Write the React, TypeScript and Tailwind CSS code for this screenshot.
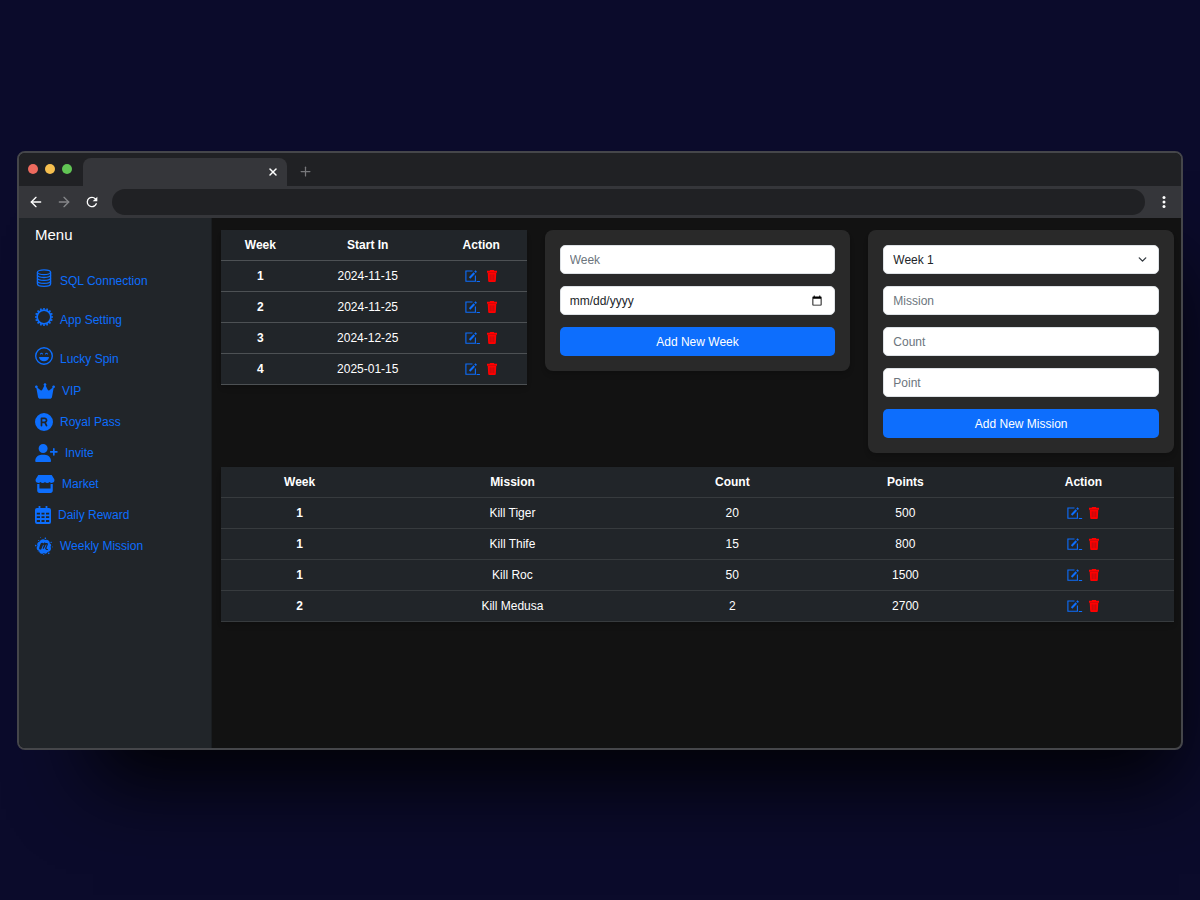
import type { ReactNode } from "react"
import { FaCrown, FaMeetup, FaRegistered, FaStore, FaUserPlus } from "react-icons/fa6"
import { ArrowLeft, ArrowRight, ChevronDown, Plus, X } from "lucide-react"

const weeks = [
  { week: 1, start: "2024-11-15" },
  { week: 2, start: "2024-11-25" },
  { week: 3, start: "2024-12-25" },
  { week: 4, start: "2025-01-15" }
]

const missions = [
  { week: 1, mission: "Kill Tiger", count: 20, points: 500 },
  { week: 1, mission: "Kill Thife", count: 15, points: 800 },
  { week: 1, mission: "Kill Roc", count: 50, points: 1500 },
  { week: 2, mission: "Kill Medusa", count: 2, points: 2700 }
]

const field =
  "block w-full h-[29px] rounded-[5px] border border-[#dee2e6] bg-white px-[9px] text-xs text-[#212529] placeholder:text-[#6c757d]"

// drops the native 1px padding round each part of the date
const dateField =
  "[&::-webkit-datetime-edit-month-field]:p-0 [&::-webkit-datetime-edit-day-field]:p-0 [&::-webkit-datetime-edit-year-field]:p-0"

function DatabaseIcon() {
  return (
    <svg viewBox="0 0 18 18" className="w-[18px] h-[18px]" fill="none" stroke="currentColor" strokeWidth="1.3">
      <ellipse cx="9" cy="3.2" rx="6.6" ry="2.4" />
      <path d="M2.4 3.2v11.5c0 1.4 2.9 2.6 6.6 2.6s6.6-1.2 6.6-2.6V3.2" />
      <path d="M2.4 6.1c0 1.4 2.9 2.4 6.6 2.4s6.6-1 6.6-2.4M2.4 9c0 1.4 2.9 2.4 6.6 2.4s6.6-1 6.6-2.4M2.4 11.9c0 1.4 2.9 2.4 6.6 2.4s6.6-1 6.6-2.4" />
    </svg>
  )
}

function GearIcon() {
  return (
    <svg viewBox="0 0 18 18" className="w-[18px] h-[18px]" fill="none" stroke="currentColor">
      <circle cx="9" cy="9" r="6.9" strokeWidth="1.8" />
      <circle cx="9" cy="9" r="8.2" strokeWidth="1.8" pathLength="64" strokeDasharray="2 2" strokeDashoffset="1" />
    </svg>
  )
}

function GrinIcon() {
  return (
    <svg viewBox="0 0 18 18" className="w-[18px] h-[18px]" fill="none" stroke="currentColor">
      <circle cx="9" cy="9" r="8.3" strokeWidth="1.4" />
      <path d="M5.6 7c.2-1.1 1.6-1.1 1.8 0M10.6 7c.2-1.1 1.6-1.1 1.8 0" strokeWidth="1.1" strokeLinecap="round" />
      <path d="M4.4 9.9h9.2c.3 0 .5.2.4.5-.5 2.3-2.5 3.8-5 3.8s-4.5-1.5-5-3.8c-.1-.3.1-.5.4-.5z" fill="currentColor" stroke="none" />
    </svg>
  )
}

function CalendarIcon() {
  return (
    <svg viewBox="0 0 16 18" className="w-4 h-[18px]" fill="currentColor">
      <path d="M3.6 0h1.8v2h5.2V0h1.8v2H14a2 2 0 0 1 2 2v12a2 2 0 0 1-2 2H2a2 2 0 0 1-2-2V4a2 2 0 0 1 2-2h1.600z" />
      <path
        className="fill-[#212529]"
        d="M1.8 6.700H5v1.700H1.800zM6.500 6.700h3v1.700h-3zM11 6.700h3.200v1.700H11zM1.800 10.200H5v1.900H1.800zM6.500 10.200h3v1.900h-3zM11 10.200h3.200v1.900H11zM1.800 13.900H5V16H1.800zM6.500 13.900h3V16h-3zM11 13.900h3.200V16H11z"
      />
    </svg>
  )
}

function EditIcon() {
  return (
    <svg viewBox="0 0 12 12" className="inline w-3 h-3" fill="none" stroke="currentColor">
      <path d="M7.5 1H.9v10.200h9.500V5.500" strokeWidth="1.1" />
      <path d="M4.6 8l4.700-5" strokeWidth="2" />
      <path d="M10 2.300l1.200-1.300" strokeWidth="2" />
    </svg>
  )
}

function TrashIcon() {
  return (
    <svg viewBox="0 0 12 12" className="w-3 h-3" fill="currentColor">
      <path d="M4.2 0h3.600l.6.800H11v2H1v-2h2.600z" />
      <path d="M1.7 2.800h8.600l-.5 8.200a1 1 0 0 1-1 1H3.200a1 1 0 0 1-1-1z" />
      <path d="M4.2 4.400v5.800M6 4.400v5.800M7.800 4.400v5.800" className="stroke-[#8f1318]" strokeWidth=".6" />
    </svg>
  )
}

const menu = [
  { label: "SQL Connection", icon: <DatabaseIcon />, tall: true },
  { label: "App Setting", icon: <GearIcon />, tall: true },
  { label: "Lucky Spin", icon: <GrinIcon />, tall: true },
  { label: "VIP", icon: <FaCrown className="w-5 h-[18px]" /> },
  { label: "Royal Pass", icon: <FaRegistered className="w-[18px] h-[18px]" /> },
  { label: "Invite", icon: <FaUserPlus className="w-[23px] h-[18px]" /> },
  { label: "Market", icon: <FaStore className="w-5 h-[18px]" /> },
  { label: "Daily Reward", icon: <CalendarIcon /> },
  { label: "Weekly Mission", icon: <FaMeetup className="w-[18px] h-[18px]" /> }
]

function RowActions() {
  return (
    <span className="inline-flex items-center gap-1.5">
      <a href="#edit" aria-label="Edit" className="underline text-[#0d6efd]">
        <EditIcon />
        {"\u00a0"}
      </a>
      <button type="button" aria-label="Delete" className="text-[#ff0000]">
        <TrashIcon />
      </button>
    </span>
  )
}

function Row({ children }: { children: ReactNode }) {
  return <tr className="h-[31px] border-b border-inherit">{children}</tr>
}

function HeadRow({ children }: { children: ReactNode }) {
  return <tr className="h-[30px] border-b border-inherit">{children}</tr>
}

export default function App() {
  return (
    <div className="min-h-screen bg-[#0b0b2b] flex flex-col justify-center px-[17px] font-['Liberation_Sans',Arial,sans-serif] text-xs text-white">

      <div className="mt-px border-2 border-[#45464a] rounded-lg overflow-hidden bg-[#121212] shadow-[36px_72px_76px_-40px_#000000e6]">

        {/* ================= TAB BAR ================= */}
        <div className="flex items-end h-[33px] bg-[#202124]">
          <div className="flex gap-[7px] pl-[9px] pr-[11px] pb-3">
            <span className="w-[10px] h-[10px] rounded-full bg-[#ed6a5e]" />
            <span className="w-[10px] h-[10px] rounded-full bg-[#f5bf4f]" />
            <span className="w-[10px] h-[10px] rounded-full bg-[#61c554]" />
          </div>
          <div className="flex items-center justify-end w-[204px] h-7 px-2 rounded-t-lg bg-[#35363a]">
            <button type="button" aria-label="Close tab">
              <X size={12} strokeWidth={3} />
            </button>
          </div>
          <button type="button" aria-label="New tab" className="self-center pl-[11px] pt-1 text-[#77787b]">
            <Plus size={15} />
          </button>
        </div>

        {/* ================= TOOLBAR ================= */}
        <div className="flex items-center h-8 pl-[9px] pr-[10px] bg-[#35363a]">
          <button type="button" aria-label="Back" className="mr-3"><ArrowLeft size={16} /></button>
          <button type="button" aria-label="Forward" className="mr-3 text-[#86878a]"><ArrowRight size={16} /></button>
          <button type="button" aria-label="Reload" className="mr-3">
            <svg viewBox="0 0 24 24" className="w-4 h-4" fill="currentColor">
              <path d="M17.65 6.35A7.96 7.96 0 0 0 12 4a8 8 0 1 0 7.73 10h-2.08A6 6 0 1 1 12 6c1.66 0 3.14.69 4.22 1.78L13 11h7V4l-2.35 2.35z" />
            </svg>
          </button>
          <div className="flex-1 h-[26px] rounded-full bg-[#202124]" />
          <button type="button" aria-label="Browser menu" className="ml-3">
            <svg viewBox="0 0 14 14" className="w-[14px] h-[14px]" fill="currentColor">
              <circle cx="7" cy="2.6" r="1.5" />
              <circle cx="7" cy="7" r="1.5" />
              <circle cx="7" cy="11.4" r="1.5" />
            </svg>
          </button>
        </div>

        <div className="flex min-h-[530px]">

          {/* ================= SIDEBAR ================= */}
          <aside className="shrink-0 w-[193px] bg-[#212529] border-r border-[#1a1d20] pl-4 pt-[5px]">
            <h1 className="text-[15px] leading-6 mb-[11px]">Menu</h1>
            <nav className="flex flex-col text-[#0d6efd]">
              {menu.map((m) => (
                <a
                  key={m.label}
                  href="#menu"
                  className={m.tall ? "flex items-center gap-[7px] h-[39px]" : "flex items-center gap-[7px] h-[31px]"}
                >
                  {m.icon}
                  <span className={m.tall ? "pt-1.5" : ""}>{m.label}</span>
                </a>
              ))}
            </nav>
          </aside>

          {/* ================= CONTENT ================= */}
          <main className="flex-1 min-w-0 pl-[9px] pr-[7px] pt-3">
            <div className="grid grid-cols-3 items-start gap-[18px]">

              <table className="w-full table-fixed text-center bg-[#212529] border-[#4d5154] shadow-md">
                <thead className="border-inherit">
                  <HeadRow>
                    <th className="w-[52px]">Week</th>
                    <th className="w-[90px]">Start In</th>
                    <th className="w-[60px]">Action</th>
                  </HeadRow>
                </thead>
                <tbody className="border-inherit">
                  {weeks.map((w) => (
                    <Row key={w.week}>
                      <th>{w.week}</th>
                      <td>{w.start}</td>
                      <td><RowActions /></td>
                    </Row>
                  ))}
                </tbody>
              </table>

              <form className="flex flex-col gap-3 p-[15px] rounded-lg bg-[#292929] shadow-md">
                <input className={field} type="text" placeholder="Week" aria-label="Week" />
                <input className={`${field} ${dateField}`} type="date" aria-label="Start date" />
                <button type="button" className="h-[29px] rounded-[5px] bg-[#0d6efd]">Add New Week</button>
              </form>

              <form className="flex flex-col gap-3 p-[15px] rounded-lg bg-[#292929] shadow-md">
                <div className="relative">
                  <select className={`${field} appearance-none`} aria-label="Mission week">
                    {weeks.map((w) => (
                      <option key={w.week}>Week {w.week}</option>
                    ))}
                  </select>
                  <ChevronDown size={13} strokeWidth={2.5} className="absolute right-[10px] top-2 text-[#343a40] pointer-events-none" />
                </div>
                <input className={field} type="text" placeholder="Mission" aria-label="Mission" />
                <input className={field} type="text" placeholder="Count" aria-label="Count" />
                <input className={field} type="text" placeholder="Point" aria-label="Point" />
                <button type="button" className="h-[29px] rounded-[5px] bg-[#0d6efd]">Add New Mission</button>
              </form>
            </div>

            <table className="w-full table-fixed mt-[14px] text-center bg-[#212529] border-[#373b3e] shadow-md">
              <thead className="border-inherit">
                <HeadRow>
                  <th className="w-[79px]">Week</th>
                  <th className="w-[135px]">Mission</th>
                  <th className="w-[86px]">Count</th>
                  <th className="w-[88px]">Points</th>
                  <th className="w-[91px]">Action</th>
                </HeadRow>
              </thead>
              <tbody className="border-inherit">
                {missions.map((m) => (
                  <Row key={m.mission}>
                    <th>{m.week}</th>
                    <td>{m.mission}</td>
                    <td>{m.count}</td>
                    <td>{m.points}</td>
                    <td><RowActions /></td>
                  </Row>
                ))}
              </tbody>
            </table>
          </main>
        </div>
      </div>
    </div>
  )
}
